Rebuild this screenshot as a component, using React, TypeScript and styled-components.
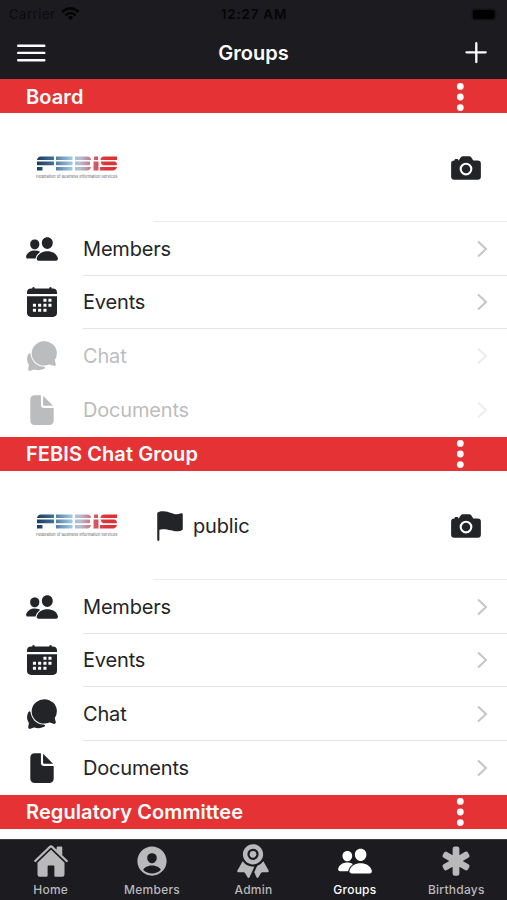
import React from "react";
import styled, { createGlobalStyle } from "styled-components";
import {
  IoPeople,
  IoChatbubbles,
  IoDocument,
  IoFlag,
  IoCamera,
  IoHome,
  IoPersonCircle,
  IoRibbon,
  IoMedical,
} from "react-icons/io5";

const GlobalStyle = createGlobalStyle`
  * { box-sizing: border-box; }
  body {
    margin: 0;
    background: #fff;
    color: #222428;
    font-family: Inter, "Liberation Sans", sans-serif;
  }
`;

const Screen = styled.div`
  width: 507px;
  height: 900px;
  display: flex;
  flex-direction: column;
  overflow: hidden;
  background: #fff;
`;

const Header = styled.header`
  flex: none;
  height: 79px;
  background: #1c1b20;
`;

const StatusBar = styled.div`
  height: 28px;
  padding: 0 8px 0 9px;
  display: grid;
  grid-template-columns: 1fr auto 1fr;
  align-items: center;
  color: #050506;
  font-size: 13px;
  line-height: 28px;
`;

const Carrier = styled.div`
  display: flex;
  align-items: center;
  gap: 6px;
  color: #0b0b0d;
  letter-spacing: 0.55px;
`;

const Clock = styled.div`
  font-size: 13.5px;
  font-weight: 600;
  letter-spacing: 0.75px;
`;

const Battery = styled.svg`
  justify-self: end;
`;

const Toolbar = styled.div`
  height: 50px;
  padding: 0 20px 0 17px;
  display: grid;
  grid-template-columns: 1fr auto 1fr;
  align-items: center;
`;

const Title = styled.h1`
  margin: 0;
  padding-left: 3px;
  color: #fff;
  font-size: 20px;
  font-weight: 600;
  line-height: 24px;
  letter-spacing: 0;
`;

const AddIcon = styled.svg`
  justify-self: end;
`;

const Content = styled.main`
  flex: 1;
  min-height: 0;
  overflow: hidden;
`;

const GroupBar = styled.div`
  height: 34px;
  padding: 1px 43px 0 26px;
  display: flex;
  align-items: center;
  justify-content: space-between;
  background: #e53335;
`;

const GroupName = styled.h2`
  margin: 0;
  color: #fff;
  font-size: 20px;
  font-weight: 600;
  line-height: 32px;
  letter-spacing: 0.09px;
`;

const GroupCard = styled.div`
  height: 108.8px;
  padding: 1px 24px 0 26px;
  display: flex;
  align-items: center;
`;

const LogoBox = styled.div`
  width: 127px;
  padding-left: 10px;
  display: flex;
  flex-direction: column;
`;

const LogoCaption = styled.div`
  width: 82px;
  margin-top: 3px;
  color: #666;
  font-size: 4px;
  line-height: 5px;
  letter-spacing: -0.05px;
  white-space: nowrap;
`;

const Visibility = styled.div`
  flex: 1;
  display: flex;
  align-items: center;
  gap: 6px;
  font-size: 20px;
  letter-spacing: -0.15px;
`;

const Rows = styled.div`
  height: 215.2px;
`;

const Row = styled.div<{ $disabled?: boolean }>`
  height: 53.8px;
  padding-left: 25px;
  display: flex;
  opacity: ${(p) => (p.$disabled ? 0.3 : 1)};
`;

const RowIcon = styled.div`
  width: 58px;
  display: flex;
  align-items: center;
  font-size: 34px;
`;

const RowBody = styled.div<{ $line: boolean }>`
  flex: 1;
  padding: 1px 18px 0 0;
  display: flex;
  align-items: center;
  justify-content: space-between;
  border-bottom: 1px solid ${(p) => (p.$line ? "#e4e4e5" : "transparent")};
`;

const CardLine = styled.div`
  height: 1px;
  margin: -1px 0 0 153px;
  background: #ebebec;
`;

const RowLabel = styled.span`
  font-size: 20px;
  letter-spacing: -0.18px;
`;

const TabBar = styled.nav`
  flex: none;
  height: 61px;
  display: grid;
  grid-template-columns: repeat(5, 1fr);
  border-top: 1px solid #3c3b40;
  background: #1c1b20;
`;

const Tab = styled.div<{ $active?: boolean }>`
  padding-top: 3px;
  display: flex;
  flex-direction: column;
  align-items: center;
  color: ${(p) => (p.$active ? "#fff" : "#b9b9bb")};
  font-size: 36px;
`;

const TabLabel = styled.span`
  margin-top: 3px;
  font-size: 12px;
  font-weight: 500;
  line-height: 15px;
  letter-spacing: 0.25px;
`;

const FebisMark = ({ id }: { id: string }) => (
  <svg width="82" height="15" viewBox="0 0 82 15">
    <defs>
      <linearGradient id={id} gradientUnits="userSpaceOnUse" x1="0" x2="82" y1="0" y2="0">
        <stop offset="0" stopColor="#18375c" />
        <stop offset="0.2" stopColor="#416b94" />
        <stop offset="0.42" stopColor="#9bc4df" />
        <stop offset="0.54" stopColor="#b7bdd0" />
        <stop offset="0.7" stopColor="#d1606c" />
        <stop offset="0.85" stopColor="#dc3438" />
        <stop offset="1" stopColor="#dd3033" />
      </linearGradient>
    </defs>
    <g fill={`url(#${id})`}>
      <path d="M5 .5H18V4H1Q1.5 .5 5 .5ZM1 5.5H18V9.3H1ZM1 11H6.5V14.4H1Z" />
      <path d="M20 .5H36.5V4H20ZM20 5.5H36.5V9.3H20ZM20 11H36.5V14.4H20Z" />
      <path d="M39 .5H51Q55 .5 55 4H39ZM39 5.5H53.5Q55 7.3 53.5 9.3H39ZM39 11H55Q54.5 14.4 51 14.4H39Z" />
      <path d="M58 .5H62V4H58ZM57.5 5.5H62.5V14.4H57.5Z" />
      <path d="M68 .5H81V4H64.5Q64.5 .5 68 .5ZM64.5 5.5H79Q81 6.3 81 9.3H67Q65 8.5 64.5 5.5ZM64 11H81Q80 14.4 77 14.4H64Z" />
    </g>
  </svg>
);

const dayCells = [
  [19, 14.5], [24, 14.5],
  [8.5, 19.5], [13.7, 19.5], [19, 19.5], [24, 19.5],
  [8.5, 24.5], [13.7, 24.5], [19, 24.5],
];

const CalendarIcon = () => (
  <svg width="34" height="34" viewBox="0 0 34 34" fill="#222428">
    <path d="M2 9V7.6Q2 3.5 6.2 3.5H7.3V2.7Q8.5 1.4 9.7 2.7V3.5H24.3V2.7Q25.5 1.4 26.7 2.7V3.5H27.8Q32 3.5 32 7.6V9Z" />
    <path d="M2 11.2H32V27.8Q32 31.9 27.8 31.9H6.2Q2 31.9 2 27.8Z" />
    <g fill="#fff">
      {dayCells.map(([x, y]) => (
        <rect key={`${x}-${y}`} x={x - 0.6} y={y - 0.8} width="3.1" height="3.1" rx="0.4" />
      ))}
    </g>
  </svg>
);

const Chevron = () => (
  <svg width="14" height="20" viewBox="0 0 14 20" fill="none" stroke="#c5c5c6" strokeWidth="2">
    <path d="M3 2.5L11 10L3 17.5" />
  </svg>
);

const Dots = () => (
  <svg width="8" height="28" viewBox="0 0 8 28" fill="#fff">
    <circle cx="4.3" cy="3.4" r="3.4" />
    <circle cx="4.3" cy="14" r="3.4" />
    <circle cx="4.3" cy="24.6" r="3.4" />
  </svg>
);

const items = [
  { label: "Members", Icon: IoPeople },
  { label: "Events", Icon: CalendarIcon },
  { label: "Chat", Icon: IoChatbubbles },
  { label: "Documents", Icon: IoDocument },
];

const tabs = [
  { label: "Home", Icon: IoHome },
  { label: "Members", Icon: IoPersonCircle },
  { label: "Admin", Icon: IoRibbon },
  { label: "Groups", Icon: IoPeople },
  { label: "Birthdays", Icon: IoMedical },
];

const GroupHeading = ({ name }: { name: string }) => (
  <GroupBar>
    <GroupName>{name}</GroupName>
    <Dots />
  </GroupBar>
);

interface GroupProps {
  id: string;
  name: string;
  isPublic?: boolean;
  enabled: number;
}

const Group = ({ id, name, isPublic, enabled }: GroupProps) => (
  <section>
    <GroupHeading name={name} />
    <GroupCard>
      <LogoBox>
        <FebisMark id={id} />
        <LogoCaption>Federation of Business Information Services</LogoCaption>
      </LogoBox>
      <Visibility>
        {isPublic && (
          <>
            <IoFlag size={34} />
            public
          </>
        )}
      </Visibility>
      <IoCamera size={34} />
    </GroupCard>
    <CardLine />
    <Rows>
      {items.map(({ label, Icon }, i) => (
        <Row key={label} $disabled={i >= enabled}>
          <RowIcon>
            <Icon />
          </RowIcon>
          <RowBody $line={i < enabled && i < items.length - 1}>
            <RowLabel>{label}</RowLabel>
            <Chevron />
          </RowBody>
        </Row>
      ))}
    </Rows>
  </section>
);

export default function App() {
  return (
    <Screen>
      <GlobalStyle />
      <Header>
        <StatusBar>
          <Carrier>
            Carrier
            <svg width="19" height="14" viewBox="0 0 19 14" fill="none" stroke="#050506" strokeWidth="2.6">
              <path d="M1.2 5Q9.5 -2.2 17.8 5M4.3 8.2Q9.5 3.8 14.7 8.2" />
              <path d="M6.6 10.2Q9.5 7.8 12.4 10.2L9.5 13.3Z" fill="#050506" stroke="none" />
            </svg>
          </Carrier>
          <Clock>12:27 AM</Clock>
          <Battery width="28" height="13" viewBox="0 0 28 13">
            <rect x=".5" y=".5" width="24.5" height="12" rx="3.5" fill="#131216" />
            <rect x="2" y="2" width="21.5" height="9" rx="2" fill="#000" />
            <path d="M26 4.5Q28 6.5 26 8.5Z" fill="#111014" />
          </Battery>
        </StatusBar>
        <Toolbar>
          <svg width="29" height="20" viewBox="0 0 29 20" stroke="#fff" strokeWidth="2.4" strokeLinecap="round">
            <path d="M1.2 2.7H27.3M1.2 9.9H27.3M1.2 17.3H27.3" />
          </svg>
          <Title>Groups</Title>
          <AddIcon width="22" height="22" viewBox="0 0 22 22" stroke="#fff" strokeWidth="2.3" strokeLinecap="round">
            <path d="M1.5 10.3H20.7M11.3 1.2V20" />
          </AddIcon>
        </Toolbar>
      </Header>
      <Content>
        <Group id="board-mark" name="Board" enabled={2} />
        <Group id="chat-mark" name="FEBIS Chat Group" isPublic enabled={4} />
        <GroupHeading name="Regulatory Committee" />
      </Content>
      <TabBar>
        {tabs.map(({ label, Icon }) => (
          <Tab key={label} $active={label === "Groups"}>
            <Icon />
            <TabLabel>{label}</TabLabel>
          </Tab>
        ))}
      </TabBar>
    </Screen>
  );
}
